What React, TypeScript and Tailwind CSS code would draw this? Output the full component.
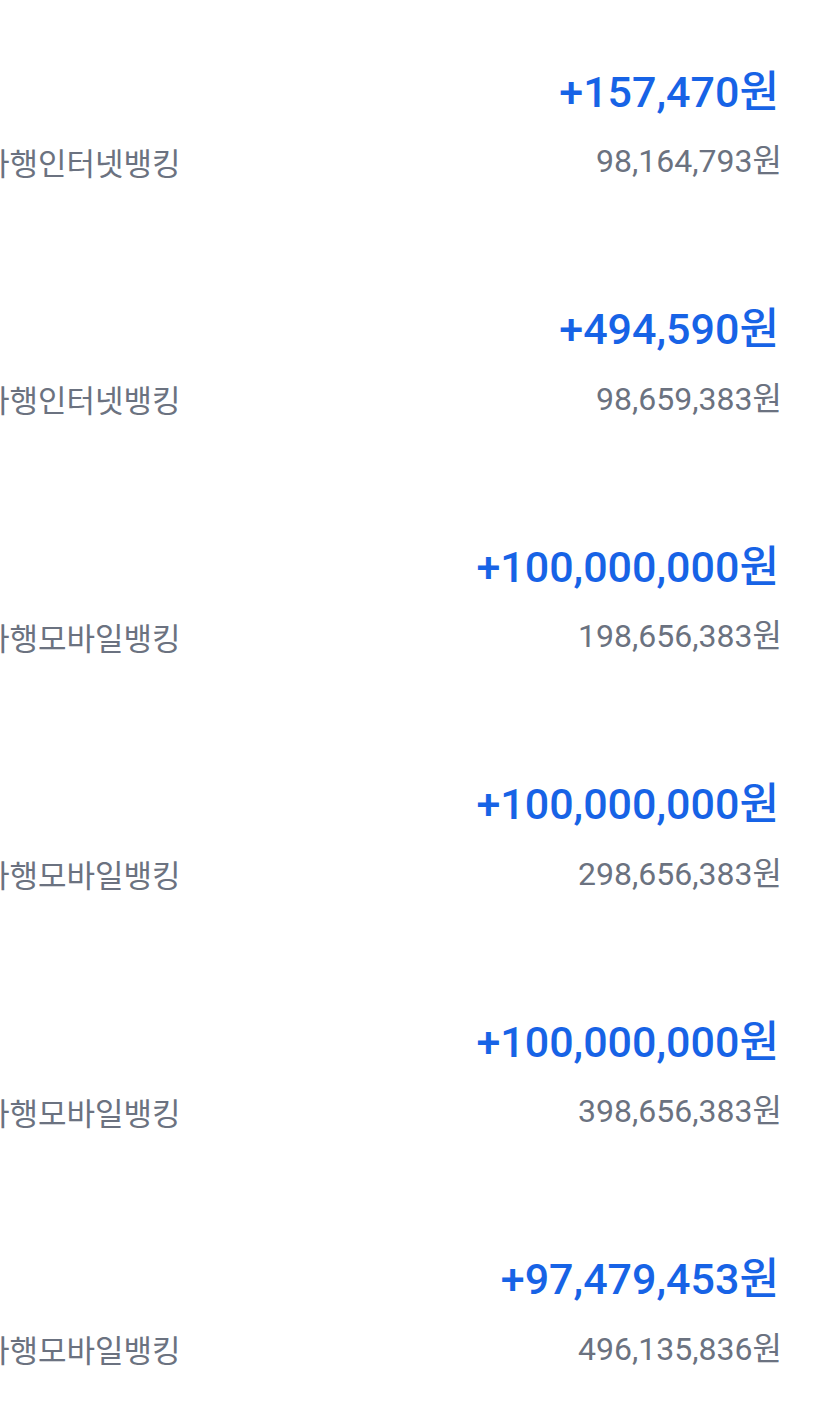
import React from "react";

const rows = [
  { amount: "+157,470원", label: "타행인터넷뱅킹", balance: "98,164,793원" },
  { amount: "+494,590원", label: "타행인터넷뱅킹", balance: "98,659,383원" },
  { amount: "+100,000,000원", label: "타행모바일뱅킹", balance: "198,656,383원" },
  { amount: "+100,000,000원", label: "타행모바일뱅킹", balance: "298,656,383원" },
  { amount: "+100,000,000원", label: "타행모바일뱅킹", balance: "398,656,383원" },
  { amount: "+97,479,453원", label: "타행모바일뱅킹", balance: "496,135,836원" },
];

export default function App() {
  return (
    <div
      className="w-[835px] h-[1425px] overflow-hidden bg-white pt-[68px]"
      style={{ fontFamily: 'Roboto, "Noto Sans CJK KR", "Noto Sans", sans-serif' }}
    >
      {rows.map((r, i) => (
        <div key={i} className="h-[237.5px] flex flex-col pr-[56px]">
          <div className="flex justify-end h-[48px] items-center text-[43px] leading-none font-medium text-[#1763e6]">
            {r.amount}
          </div>
          <div className="mt-[25px] h-[40px] flex items-center justify-between">
            <span
              className="ml-[-19px] text-[31px] leading-none text-[#6b7280] whitespace-nowrap"
              style={{ fontFamily: '"Noto Sans CJK KR", sans-serif' }}
            >
              {r.label}
            </span>
            <span className="mr-[-3px] text-[32px] leading-none text-[#6b7280]">{r.balance}</span>
          </div>
        </div>
      ))}
    </div>
  );
}
